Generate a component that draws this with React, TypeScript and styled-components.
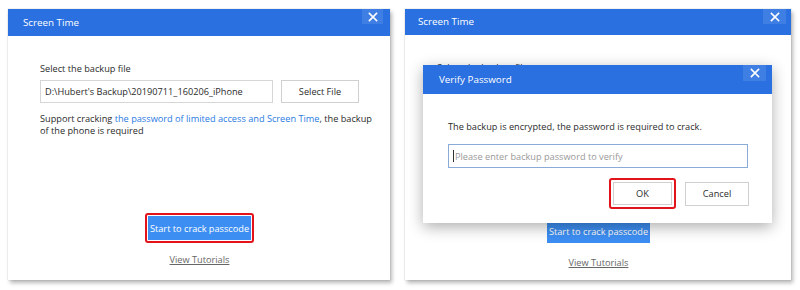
import React from "react";
import styled, { createGlobalStyle } from "styled-components";

const GlobalStyle = createGlobalStyle`
  html, body { margin: 0; padding: 0; background: #ffffff; }
  body { font-family: "Open Sans", "Noto Sans", Arial, sans-serif; color: #2b2b2b; }
  * { box-sizing: border-box; }
`;

const Page = styled.div`
  display: flex;
  align-items: flex-start;
  gap: 15px;
  padding: 9px 0 0 8px;
  width: 800px;
  height: 290px;
`;

const Dialog = styled.div<{ $w: number }>`
  position: relative;
  width: ${(p) => p.$w}px;
  height: 271px;
  background: #fff;
  display: flex;
  flex-direction: column;
  box-shadow: 2px 3px 4px rgba(0, 0, 0, 0.28), 0 0 1px rgba(0, 0, 0, 0.25);
`;

const TitleBar = styled.div<{ $h: number; $pad: number }>`
  height: ${(p) => p.$h}px;
  flex: none;
  background: #2a70e0;
  color: #fff;
  display: flex;
  justify-content: space-between;
  align-items: flex-start;
  padding-left: ${(p) => p.$pad}px;
`;

const Title = styled.div<{ $h: number }>`
  font-size: 9.8px;
  line-height: ${(p) => p.$h}px;
`;

const CloseBtn = styled.div<{ $w: number; $h: number; $r: number }>`
  width: ${(p) => p.$w}px;
  height: ${(p) => p.$h}px;
  margin-right: ${(p) => p.$r}px;
  background: rgba(255, 255, 255, 0.1);
  display: flex;
  align-items: center;
  justify-content: center;
`;

const Body = styled.div<{ $bottom: number }>`
  flex: 1;
  display: flex;
  flex-direction: column;
  padding: 26px 31px ${(p) => p.$bottom}px 32px;
`;

const Label = styled.div`
  font-size: 9.2px;
  line-height: 14px;
  white-space: nowrap;
`;

const FileRow = styled.div`
  display: flex;
  gap: 8px;
  margin-top: 4px;
`;

const PathBox = styled.div`
  width: 233px;
  height: 23px;
  border: 1px solid #d6d6d6;
  font-size: 9.2px;
  line-height: 21px;
  padding-left: 4px;
  white-space: nowrap;
  overflow: hidden;
`;

const GreyButton = styled.div<{ $w: number; $h: number }>`
  width: ${(p) => p.$w}px;
  height: ${(p) => p.$h}px;
  border: 1px solid #d0d0d0;
  background: #fff;
  font-size: 9.2px;
  white-space: nowrap;
  display: flex;
  align-items: center;
  justify-content: center;
  color: #2b2b2b;
`;

const Support = styled.div`
  margin-top: 10px;
  font-size: 9.2px;
  line-height: 12px;
  width: 338px;
`;

const Link = styled.span`
  color: #2a7ae2;
`;

const Footer = styled.div`
  margin-top: auto;
  display: flex;
  flex-direction: column;
  align-items: center;
`;

const Highlight = styled.div<{ $pad: number; $on: boolean }>`
  border: 2px solid ${(p) => (p.$on ? "#e3131b" : "transparent")};
  border-radius: 3px;
  padding: ${(p) => p.$pad}px;
`;

const PrimaryButton = styled.div`
  width: 103px;
  height: 24px;
  background: #3d8ef2;
  color: #fff;
  font-size: 9.2px;
  white-space: nowrap;
  display: flex;
  align-items: center;
  justify-content: center;
`;

const TutorialLink = styled.div`
  margin-top: 10px;
  font-size: 9.2px;
  line-height: 14px;
  color: #666;
  text-decoration: underline;
`;

const Modal = styled.div`
  position: absolute;
  left: 18px;
  top: 56px;
  width: 349px;
  height: 158px;
  background: #fff;
  display: flex;
  flex-direction: column;
  box-shadow: 0 4px 14px rgba(0, 0, 0, 0.32);
`;

const ModalBody = styled.div`
  display: flex;
  flex-direction: column;
  padding: 26px 24px 0 25px;
`;

const PassInput = styled.div`
  margin-top: 10px;
  width: 300px;
  height: 24px;
  border: 1px solid #8aaad8;
  display: flex;
  align-items: center;
  padding-left: 4px;
  font-size: 9.2px;
  color: #999;
  white-space: nowrap;
`;

const Caret = styled.span`
  display: inline-block;
  width: 1px;
  height: 12px;
  background: #333;
  margin-right: 1px;
`;

const ButtonRow = styled.div`
  display: flex;
  justify-content: flex-end;
  align-items: center;
  gap: 9px;
  margin-top: 10px;
  width: 301px;
`;

const CloseIcon = () => (
  <svg width="10" height="10" viewBox="0 0 10 10">
    <path d="M1.5 1.5 L8.5 8.5 M8.5 1.5 L1.5 8.5" stroke="#fff" strokeWidth="1.7" strokeLinecap="square" />
  </svg>
);

const ScreenTime = ({ width, highlight, bottom, titleH, children }: { width: number; highlight: boolean; bottom: number; titleH: number; children?: React.ReactNode }) => (
  <Dialog $w={width}>
    <TitleBar $h={titleH} $pad={highlight ? 15 : 13}>
      <Title $h={titleH}>Screen Time</Title>
      <CloseBtn $w={highlight ? 21 : 23} $h={15} $r={highlight ? 7 : 5}>
        <CloseIcon />
      </CloseBtn>
    </TitleBar>
    <Body $bottom={bottom}>
      <Label>Select the backup file</Label>
      <FileRow>
        <PathBox>D:\Hubert's Backup\20190711_160206_iPhone</PathBox>
        <GreyButton $w={78} $h={23}>Select File</GreyButton>
      </FileRow>
      <Support>
        Support cracking <Link>the password of limited access and Screen Time</Link>, the backup of the phone is required
      </Support>
      <Footer>
        <Highlight $pad={1} $on={highlight}>
          <PrimaryButton>Start to crack passcode</PrimaryButton>
        </Highlight>
        <TutorialLink>View Tutorials</TutorialLink>
      </Footer>
    </Body>
    {children}
  </Dialog>
);

export default function App() {
  return (
    <>
      <GlobalStyle />
      <Page>
        <ScreenTime width={382} highlight bottom={13} titleH={27} />
        <ScreenTime width={386} highlight={false} bottom={10} titleH={26}>
          <Modal>
            <TitleBar $h={29} $pad={16}>
              <Title $h={29}>Verify Password</Title>
              <CloseBtn $w={23} $h={16} $r={6}>
                <CloseIcon />
              </CloseBtn>
            </TitleBar>
            <ModalBody>
              <Label>The backup is encrypted, the password is required to crack.</Label>
              <PassInput>
                <Caret />
                Please enter backup password to verify
              </PassInput>
              <ButtonRow>
                <Highlight $pad={2} $on>
                  <GreyButton $w={59} $h={23}>OK</GreyButton>
                </Highlight>
                <GreyButton $w={64} $h={24}>Cancel</GreyButton>
              </ButtonRow>
            </ModalBody>
          </Modal>
        </ScreenTime>
      </Page>
    </>
  );
}
